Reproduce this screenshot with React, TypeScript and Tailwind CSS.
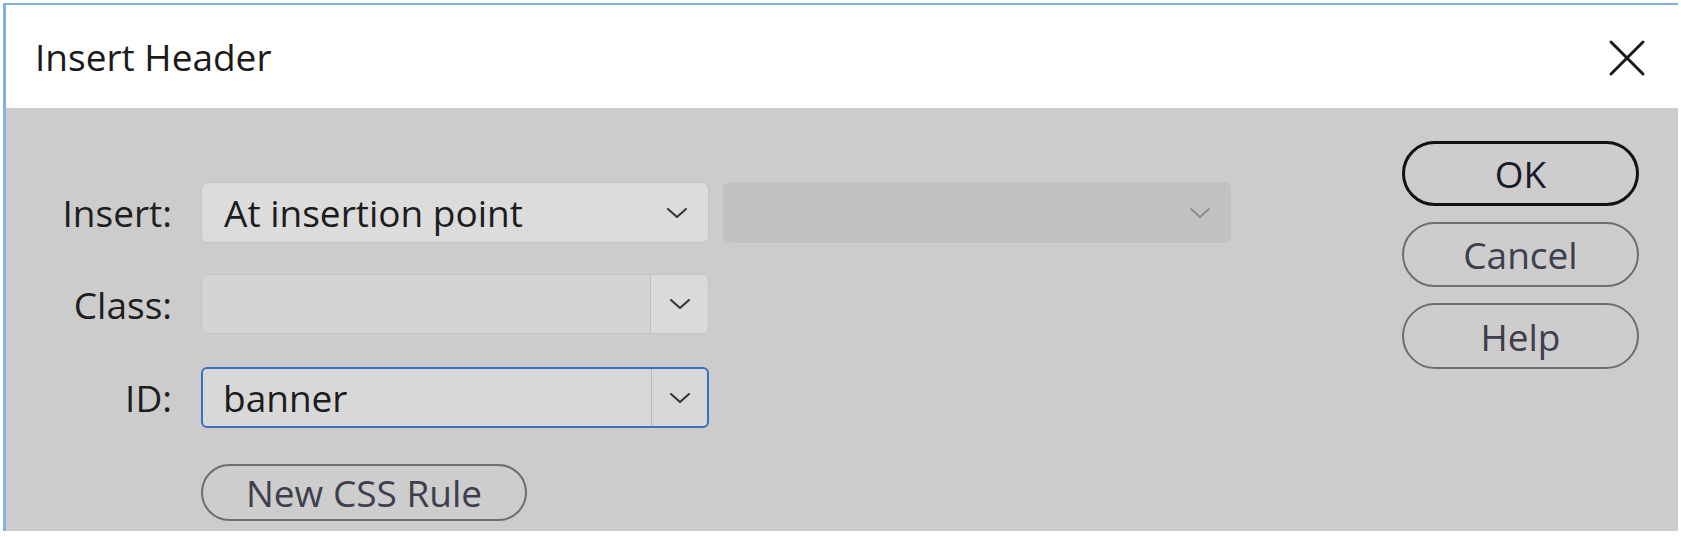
import React from 'react'

const font = { fontFamily: '"Open Sans", "Noto Sans", "DejaVu Sans", sans-serif' }

function Chevron({ color = '#333333' }: { color?: string }) {
  return (
    <svg width="22" height="12" viewBox="0 0 22 12" fill="none">
      <path d="M2 2 L11 10 L20 2" stroke={color} strokeWidth="2" strokeLinecap="round" strokeLinejoin="round" />
    </svg>
  )
}

function Label({ children }: { children: React.ReactNode }) {
  return (
    <div className="w-[166px] shrink-0 text-right text-[37px] font-medium leading-none text-[#1e1e1e]">
      {children}
    </div>
  )
}

function PillButton({ children, primary = false, className = '' }: { children: React.ReactNode; primary?: boolean; className?: string }) {
  return (
    <button
      className={
        'flex items-center justify-center rounded-full text-[37px] font-medium leading-none bg-[#cdcdcd] ' +
        (primary ? 'border-[3px] border-[#111111] text-[#1a1a2a] ' : 'border-2 border-[#6e6e6e] text-[#3e3e4c] ') +
        className
      }
    >
      {children}
    </button>
  )
}

export default function App() {
  return (
    <div className="min-h-screen bg-white pl-[3px] pt-[3px]" style={font}>
      <div className="flex h-[528px] w-[1675px] flex-col border-l-[3px] border-t-2 border-[#82b1e3]">
        {/* title bar */}
        <div className="flex h-[103px] shrink-0 items-center justify-between bg-white pl-[29px] pr-[32px]">
          <div className="text-[37px] font-medium leading-none text-[#1a1a1a]">Insert Header</div>
          <svg width="38" height="38" viewBox="0 0 38 38" className="mt-[2px]">
            <path d="M3 3 L35 35 M35 3 L3 35" stroke="#1a1a1a" strokeWidth="3" strokeLinecap="round" />
          </svg>
        </div>

        {/* body */}
        <div className="flex flex-1 bg-[#cccccc] pr-[39px]">
          <div className="flex flex-1 flex-col pt-[74px]">
            <div className="flex h-[61px] items-center">
              <Label>Insert:</Label>
              <div className="ml-[29px] flex h-full w-[508px] items-center justify-between rounded-[7px] border border-[#c4c4c4] bg-[#dcdcdc] pl-[22px] pr-[20px]">
                <span className="text-[37px] font-medium leading-none text-[#1c1c1c]">At insertion point</span>
                <Chevron />
              </div>
              <div className="ml-[14px] flex h-full w-[508px] items-center justify-end rounded-[7px] bg-[#c2c2c2] pr-[20px]">
                <Chevron color="#8c8c8c" />
              </div>
            </div>

            <div className="mt-[31px] flex h-[60px] items-center">
              <Label>Class:</Label>
              <div className="ml-[29px] flex h-full w-[508px] items-stretch rounded-[7px] border border-[#c4c4c4] bg-[#d4d4d4]">
                <div className="flex-1" />
                <div className="flex w-[58px] items-center justify-center rounded-r-[7px] border-l border-[#bcbcbc] bg-[#dadada]">
                  <Chevron />
                </div>
              </div>
            </div>

            <div className="mt-[33px] flex h-[61px] items-center">
              <Label>ID:</Label>
              <div className="ml-[29px] flex h-full w-[508px] items-stretch rounded-[6px] border-2 border-[#3b6fc0] bg-[#d8d8d8]">
                <div className="flex flex-1 items-center pl-[20px]">
                  <span className="text-[37px] font-medium leading-none text-[#1c1c1c]">banner</span>
                </div>
                <div className="flex w-[56px] items-center justify-center border-l border-[#b8b8b8]">
                  <Chevron />
                </div>
              </div>
            </div>

            <div className="mt-[36px] flex">
              <div className="w-[166px] shrink-0" />
              <PillButton className="ml-[29px] h-[57px] w-[326px]">New CSS Rule</PillButton>
            </div>
          </div>

          <div className="flex w-[237px] flex-col gap-[16px] pt-[33px]">
            <PillButton primary className="h-[65px] w-full">OK</PillButton>
            <PillButton className="h-[65px] w-full">Cancel</PillButton>
            <PillButton className="h-[66px] w-full">Help</PillButton>
          </div>
        </div>
      </div>
    </div>
  )
}
